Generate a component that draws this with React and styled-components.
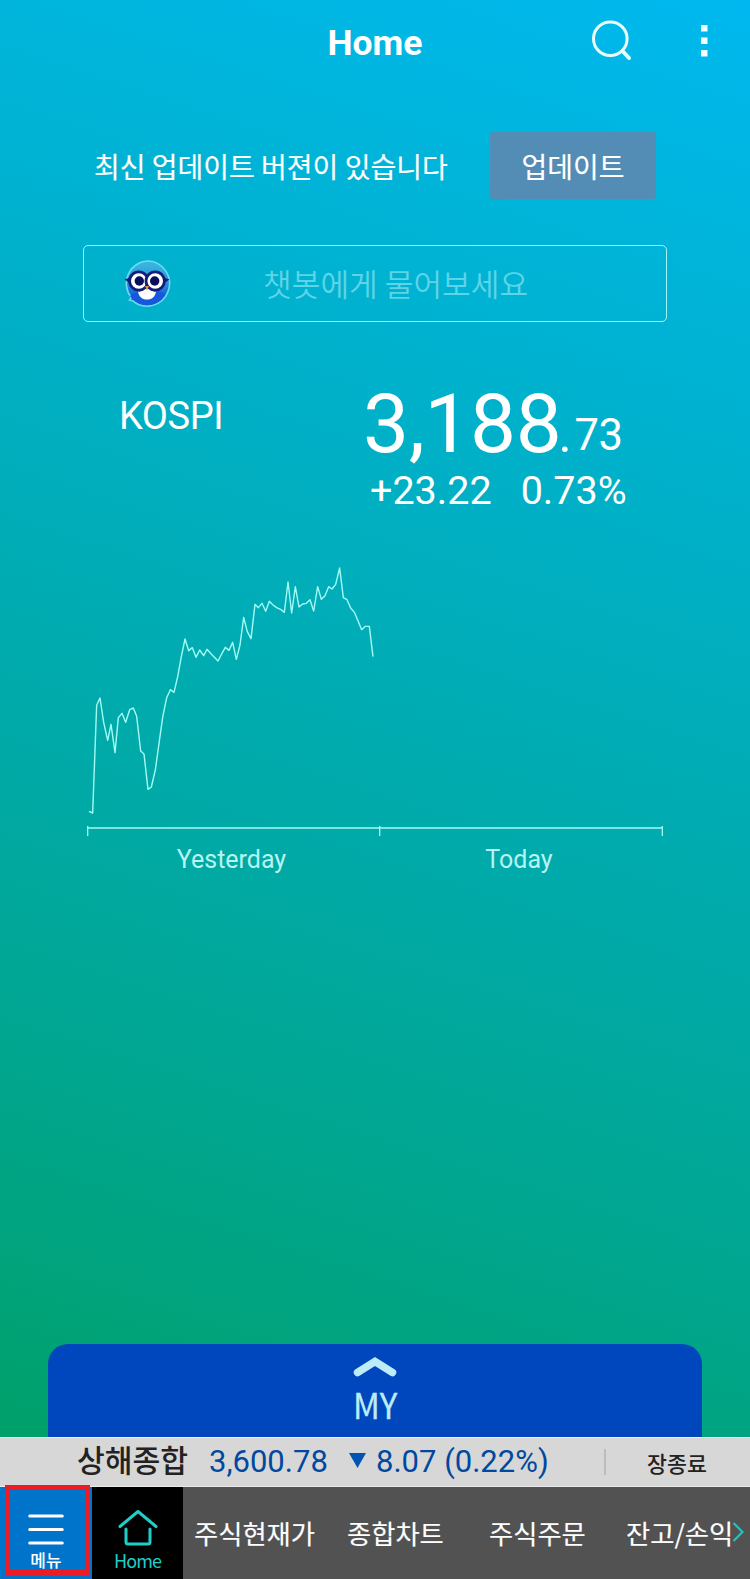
import React from 'react';
import styled, { createGlobalStyle } from 'styled-components';

const latin = `Roboto, 'Noto Sans CJK KR', sans-serif`;
const korean = `'Noto Sans CJK KR', 'Noto Sans', sans-serif`;

const GlobalStyle = createGlobalStyle`
  * {
    box-sizing: border-box;
  }

  body {
    margin: 0;
    font-family: ${korean};
    white-space: nowrap;
  }

  svg {
    display: block;
    flex: none;
  }
`;

const Screen = styled.div`
  display: flex;
  flex-direction: column;
  width: 750px;
  height: 1579px;
  overflow: hidden;
  color: #fff;
  background: linear-gradient(
    198deg,
    #00b8f0 0%,
    #00b5dc 13%,
    #00b1cc 27%,
    #00adb8 41%,
    #00a9a3 57%,
    #00a587 76%,
    #00a06a 92%
  );
`;

const Header = styled.header`
  display: grid;
  grid-template-columns: 1fr auto 1fr;
  align-items: center;
  height: 85px;
  padding: 0 42px;
`;

const Title = styled.h1`
  grid-column: 2;
  margin: 0;
  padding-top: 1px;
  font: 700 35.5px/84px ${latin};
`;

const Actions = styled.div`
  display: flex;
  justify-content: flex-end;
  align-items: center;
  gap: 67px;
  padding-bottom: 4px;
`;

const UpdateRow = styled.div`
  display: flex;
  justify-content: space-between;
  align-items: center;
  height: 67px;
  margin-top: 47px;
  padding: 0 94px;
  -webkit-text-stroke: 0.15px currentColor;
`;

const UpdateText = styled.span`
  font-size: 28px;
  line-height: 40px;
`;

const UpdateButton = styled.button`
  width: 166px;
  height: 67px;
  padding: 0;
  border: 0;
  border-radius: 3px;
  color: #fff;
  background: #538cb5;
  font: 400 28px/40px ${korean};
`;

const ChatBox = styled.div`
  display: flex;
  align-items: center;
  height: 77px;
  margin: 46px 83px 0;
  padding-left: 39px;
  border: 1.5px solid #a5f2f4;
  border-radius: 5px;
`;

const Placeholder = styled.span`
  margin-left: 92px;
  padding-bottom: 2px;
  color: #5ed4e6;
  font-size: 31.2px;
  font-weight: 350;
  line-height: 44px;
`;

const Quote = styled.section`
  display: flex;
  justify-content: space-between;
  height: 170px;
  margin-top: 58px;
  padding: 0 122px 0 119px;
`;

const QuoteName = styled.span`
  padding-top: 14px;
  font: 400 38px/44px ${latin};
  letter-spacing: -0.4px;
`;

const QuoteValues = styled.div`
  display: flex;
  flex-direction: column;
  gap: 6px;
  width: 265px;
  padding-top: 9px;
`;

const Price = styled.div`
  display: flex;
  align-items: baseline;
  height: 76px;
  font: 400 82px/70px ${latin};
  letter-spacing: -0.4px;
`;

const Point = styled.span`
  width: 16px;
  margin-left: -3px;
  font-size: 50px;
  line-height: 50px;
`;

const Decimal = styled.span`
  align-self: flex-start;
  padding-top: 22px;
  font-size: 43.5px;
  line-height: 50px;
  letter-spacing: -0.5px;
`;

const Change = styled.div`
  display: flex;
  gap: 29px;
  padding-left: 7px;
  font: 400 39.5px/40px ${latin};
`;

const AxisLabels = styled.div`
  display: grid;
  grid-template-columns: 291px 284px;
  padding-left: 86px;
  color: #b5f5f2;
  font: 400 25px/40px ${latin};
  text-align: center;
`;

const MyPanel = styled.div`
  display: flex;
  flex-direction: column;
  align-items: center;
  height: 93px;
  margin: auto 48px 0;
  padding-top: 11px;
  border-radius: 20px 20px 0 0;
  color: #bcebf9;
  background: #0047bd;
`;

const MyLabel = styled.span`
  padding-top: 2px;
  font-size: 36px;
  line-height: 44px;
  transform: scaleX(0.92);
  -webkit-text-stroke: 0.3px currentColor;
`;

const Ticker = styled.div`
  display: flex;
  align-items: center;
  flex: none;
  height: 50px;
  padding-left: 77px;
  border-top: 1px solid #e8f0fa;
  border-bottom: 1px solid #ececec;
  color: #222;
  background: #d7d7d7;
`;

const TickerName = styled.span`
  width: 132px;
  padding-bottom: 6px;
  font-size: 30.2px;
  font-weight: 500;
  line-height: 42px;
`;

const TickerValue = styled.span`
  width: ${({ $width }) => $width}px;
  color: #0048a0;
  font: 400 31px/44px ${latin};
`;

const Triangle = styled.span`
  width: 17px;
  height: 15px;
  margin: 0 10px 3px 0;
  background: #0054b4;
  clip-path: polygon(0 0, 100% 0, 50% 100%);
`;

const Divider = styled.span`
  width: 2px;
  height: 26px;
  margin-right: 41px;
  background: #bcbcbc;
`;

const MarketState = styled.span`
  font-size: 21.7px;
  font-weight: 500;
`;

const NavBar = styled.nav`
  display: flex;
  flex: none;
  height: 92px;
  background: #525252;
`;

const NavTile = styled.div`
  position: relative;
  display: flex;
  flex-direction: column;
  align-items: center;
  width: ${({ $width }) => $width}px;
  color: ${({ $color }) => $color};
  background: ${({ $background }) => $background};
`;

const TileLabel = styled.span`
  font-size: ${({ $size }) => $size}px;
  font-weight: ${({ $weight }) => $weight};
  letter-spacing: ${({ $spacing }) => $spacing || 0}px;
  line-height: 18px;
`;

const Highlight = styled.span`
  position: absolute;
  top: -2px;
  left: 5px;
  width: 84.5px;
  height: 90px;
  border: 5px solid #ed1c24;
`;

const NavLinks = styled.div`
  display: flex;
  align-items: center;
  padding: 0 0 2px 11px;
  -webkit-text-stroke: 0.15px currentColor;
`;

const NavLink = styled.span`
  width: ${({ $width }) => $width}px;
  font-size: 26.3px;
`;

// five-minute ticks of the previous session, chart units
const ticks = [
  [42, 784], [53, 789], [65, 466], [75, 444], [86, 517], [98, 571], [108, 523],
  [120, 608], [130, 503], [141, 490], [152, 517], [164, 479], [175, 474],
  [185, 499], [197, 603], [207, 612], [219, 718], [229, 711], [241, 660],
  [252, 580], [263, 502], [275, 443], [286, 419], [297, 427], [308, 380],
  [319, 320], [330, 267], [341, 302], [352, 293], [363, 322], [374, 300],
  [386, 317], [396, 298], [408, 311], [429, 333], [441, 310], [451, 292],
  [462, 301], [473, 277], [484, 328], [495, 285], [506, 202], [517, 245],
  [528, 266], [540, 163], [550, 173], [561, 160], [572, 184], [583, 154],
  [594, 165], [605, 173], [618, 179], [628, 187], [639, 96], [650, 189],
  [661, 110], [672, 171], [683, 162], [694, 160], [705, 149], [716, 183],
  [728, 110], [739, 148], [750, 137], [761, 110], [771, 117], [782, 103],
  [794, 54], [805, 143], [816, 149], [827, 174], [838, 187], [849, 212],
  [860, 239], [871, 229], [883, 229], [894, 320],
];

const ChartSvg = styled.svg`
  margin-left: 75px;
  fill: none;
  stroke: #a4fbf4;
`;

const Chart = () => (
  <ChartSvg width="600" height="290" viewBox="0 0 1800 870">
    <polyline
      points={ticks.map(p => p.join(',')).join(' ')}
      strokeWidth="4.2"
      strokeLinejoin="round"
    />
    <path d="M37 834H1763" strokeWidth="5" />
    <path d="M38 828V858M914 828V858M1762 828V858" strokeWidth="4" />
  </ChartSvg>
);

const SearchIcon = () => (
  <svg
    width="42"
    height="42"
    viewBox="0 0 42 42"
    fill="none"
    stroke="#e9fdff"
    strokeWidth="3"
    strokeLinecap="round"
  >
    <circle cx="18.3" cy="18.7" r="16.8" />
    <path d="M30.5 31l6.5 7" strokeWidth="4" />
  </svg>
);

const MoreIcon = () => (
  <svg width="7" height="33" viewBox="0 0 7 33" fill="#f2feff">
    <rect y="1" width="6.5" height="6.5" />
    <rect y="13.5" width="6.5" height="6.5" />
    <rect y="26" width="6.5" height="6.5" />
  </svg>
);

const Owl = () => (
  <svg width="48" height="48" viewBox="0 0 48 48">
    <defs>
      <linearGradient id="owl" x1="0" y1="0" x2="0" y2="1">
        <stop offset="0.1" stopColor="#36b4df" />
        <stop offset="0.55" stopColor="#2583dc" />
        <stop offset="0.75" stopColor="#1763dd" />
      </linearGradient>
    </defs>
    <path
      d="M24 1a22.5 22.5 0 1 1-14.5 39.7l-3-0.7 1.8-2.5A22.5 22.5 0 0 1 24 1z"
      fill="url(#owl)"
      stroke="#6edaf0"
      strokeWidth="1.6"
    />
    <path d="M7 36c4-6 30-6 35-2-6 14-26 15-35 2z" fill="#1558dc" />
    <path d="M15 31.5c3.5 1 6-3.5 9-3.5s5.5 4.500 9 3.500c-1 5.500-4 8-9 8s-8-2.500-9-8z" fill="#fff" />
    <path d="M1.500 19.500l6-2v6zM46.500 19.500l-6-2v6z" fill="#101e78" />
    <circle cx="15.800" cy="21" r="9.200" fill="#fff" stroke="#101e78" strokeWidth="2.800" />
    <circle cx="32.200" cy="21" r="9.200" fill="#fff" stroke="#101e78" strokeWidth="2.800" />
    <circle cx="16.300" cy="21" r="4.700" fill="#0a0e5c" />
    <circle cx="31.700" cy="21" r="4.700" fill="#0a0e5c" />
    <path d="M22 26h4L24 30.500z" fill="#e8883a" />
  </svg>
);

const ChevronUp = () => (
  <svg width="44" height="24" viewBox="0 0 44 24" fill="none">
    <path
      d="M4.500 17.500L22 6.500l17.500 11"
      stroke="#bcebf9"
      strokeWidth="7.500"
      strokeLinecap="round"
    />
  </svg>
);

const MenuIcon = () => (
  <svg width="36" height="64" viewBox="0 0 36 64" stroke="#fff" strokeWidth="3.200">
    <path d="M1.800 29h32.400M1.800 42.500h32.400M1.800 56h32.400" strokeLinecap="round" />
  </svg>
);

const HouseIcon = () => (
  <svg
    width="42"
    height="64"
    viewBox="0 0 42 64"
    fill="none"
    stroke="currentColor"
    strokeWidth="3"
    strokeLinecap="round"
    strokeLinejoin="round"
  >
    <path d="M3 39.500L21 24.500l18 15" />
    <path d="M9 42v13q0 2 2 2h20q2 0 2-2V42" />
  </svg>
);

const NextIcon = () => (
  <svg width="12" height="22" viewBox="0 0 12 22" fill="none">
    <path d="M0.500 2l9 9-9 9" stroke="#20c4bc" strokeWidth="2.200" />
  </svg>
);

const App = () => {
  return (
    <Screen>
      <GlobalStyle />
      <Header>
        <Title>Home</Title>
        <Actions>
          <SearchIcon />
          <MoreIcon />
        </Actions>
      </Header>
      <UpdateRow>
        <UpdateText>최신 업데이트 버젼이 있습니다</UpdateText>
        <UpdateButton>업데이트</UpdateButton>
      </UpdateRow>
      <ChatBox>
        <Owl />
        <Placeholder>챗봇에게 물어보세요</Placeholder>
      </ChatBox>
      <Quote>
        <QuoteName>KOSPI</QuoteName>
        <QuoteValues>
          <Price>
            3,188
            <Point>.</Point>
            <Decimal>73</Decimal>
          </Price>
          <Change>
            <span>+23.22</span>
            <span>0.73%</span>
          </Change>
        </QuoteValues>
      </Quote>
      <Chart />
      <AxisLabels>
        <span>Yesterday</span>
        <span>Today</span>
      </AxisLabels>
      <MyPanel>
        <ChevronUp />
        <MyLabel>MY</MyLabel>
      </MyPanel>
      <Ticker>
        <TickerName>상해종합</TickerName>
        <TickerValue $width={140}>3,600.78</TickerValue>
        <Triangle />
        <TickerValue $width={228}>8.07 (0.22%)</TickerValue>
        <Divider />
        <MarketState>장종료</MarketState>
      </Ticker>
      <NavBar>
        <NavTile $width={92} $color="#fff" $background="#0073cb">
          <MenuIcon />
          <TileLabel $size={17} $weight={500}>
            메뉴
          </TileLabel>
          <Highlight />
        </NavTile>
        <NavTile $width={91} $color="#1fcfc7" $background="#000">
          <HouseIcon />
          <TileLabel $size={18} $weight={400} $spacing={-0.9}>
            Home
          </TileLabel>
        </NavTile>
        <NavLinks>
          <NavLink $width={153}>주식현재가</NavLink>
          <NavLink $width={142}>종합차트</NavLink>
          <NavLink $width={137}>주식주문</NavLink>
          <NavLink $width={107}>잔고/손익</NavLink>
          <NextIcon />
        </NavLinks>
      </NavBar>
    </Screen>
  );
};

export default App;
